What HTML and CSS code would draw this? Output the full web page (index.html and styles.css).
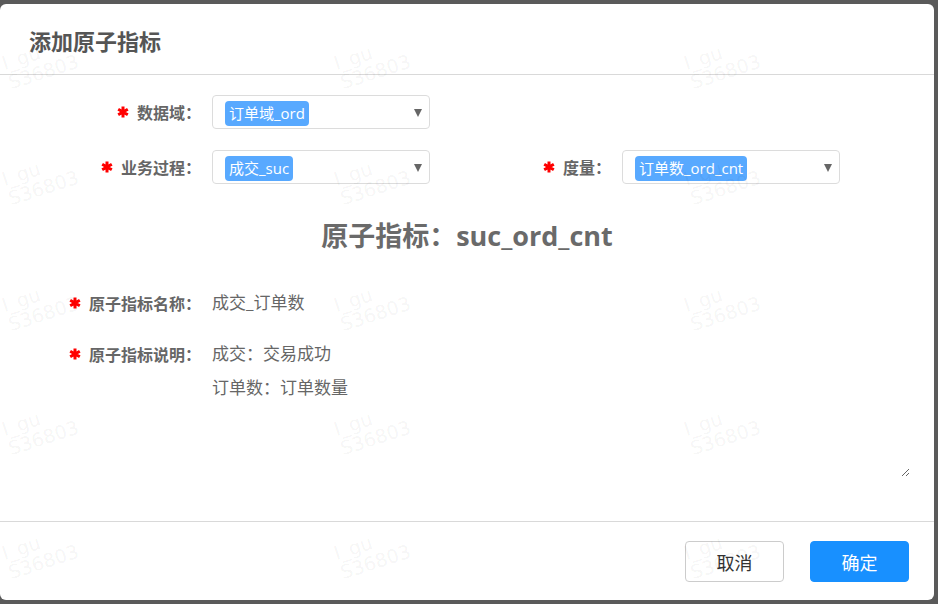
FILE: index.html
```html
<!DOCTYPE html>
<html lang="zh-CN">
<head>
<meta charset="utf-8">
<title>添加原子指标</title>
<link rel="stylesheet" href="styles.css">
</head>
<body>
<div class="dialog">
  <div class="dlg-header">添加原子指标</div>
  <div class="dlg-body">
    <div class="row">
      <div class="item">
        <label class="label w197"><svg class="req" viewBox="0 0 12 12"><path d="M6 0.5v11M1.2 3.2l9.6 5.6M1.2 8.8l9.6-5.6"/></svg>数据域：</label>
        <div class="select"><span class="tag">订单域_ord</span><span class="arrow"></span></div>
      </div>
    </div>
    <div class="row">
      <div class="item">
        <label class="label w197"><svg class="req" viewBox="0 0 12 12"><path d="M6 0.5v11M1.2 3.2l9.6 5.6M1.2 8.8l9.6-5.6"/></svg>业务过程：</label>
        <div class="select"><span class="tag">成交_suc</span><span class="arrow"></span></div>
      </div>
      <div class="item">
        <label class="label w177"><svg class="req" viewBox="0 0 12 12"><path d="M6 0.5v11M1.2 3.2l9.6 5.6M1.2 8.8l9.6-5.6"/></svg>度量：</label>
        <div class="select"><span class="tag">订单数_ord_cnt</span><span class="arrow"></span></div>
      </div>
    </div>
    <h2 class="metric">原子指标：suc_ord_cnt</h2>
    <div class="row name-row">
      <label class="label w197"><svg class="req" viewBox="0 0 12 12"><path d="M6 0.5v11M1.2 3.2l9.6 5.6M1.2 8.8l9.6-5.6"/></svg>原子指标名称：</label>
      <div class="value">成交_订单数</div>
    </div>
    <div class="row desc-row">
      <label class="label w197 desc-label"><svg class="req" viewBox="0 0 12 12"><path d="M6 0.5v11M1.2 3.2l9.6 5.6M1.2 8.8l9.6-5.6"/></svg>原子指标说明：</label>
      <textarea class="desc">成交：交易成功
订单数：订单数量</textarea>
    </div>
  </div>
  <div class="dlg-footer">
    <button class="btn">取消</button>
    <button class="btn primary">确定</button>
  </div>
  <div class="watermarks" aria-hidden="true">
    <span class="wm" style="left:4px;top:38px">l_gu<br>S36803</span>
    <span class="wm" style="left:336px;top:38px">l_gu<br>S36803</span>
    <span class="wm" style="left:686px;top:38px">l_gu<br>S36803</span>
    <span class="wm" style="left:4px;top:154px">l_gu<br>S36803</span>
    <span class="wm" style="left:336px;top:154px">l_gu<br>S36803</span>
    <span class="wm" style="left:686px;top:154px">l_gu<br>S36803</span>
    <span class="wm" style="left:4px;top:280px">l_gu<br>S36803</span>
    <span class="wm" style="left:336px;top:280px">l_gu<br>S36803</span>
    <span class="wm" style="left:686px;top:280px">l_gu<br>S36803</span>
    <span class="wm" style="left:4px;top:404px">l_gu<br>S36803</span>
    <span class="wm" style="left:336px;top:404px">l_gu<br>S36803</span>
    <span class="wm" style="left:686px;top:404px">l_gu<br>S36803</span>
    <span class="wm" style="left:4px;top:528px">l_gu<br>S36803</span>
    <span class="wm" style="left:336px;top:528px">l_gu<br>S36803</span>
    <span class="wm" style="left:686px;top:528px">l_gu<br>S36803</span>
  </div>
</div>
</body>
</html>
```
FILE: styles.css
```css
html, body {
  margin: 0;
  padding: 0;
}
body {
  background: #5a5a5a;
  font-family: "Open Sans", "Noto Sans CJK SC", sans-serif;
  width: 938px;
  height: 604px;
  overflow: hidden;
}
.dialog {
  position: relative;
  margin-top: 4px;
  width: 934px;
  height: 596px;
  background: #fff;
  border-radius: 6px;
  display: flex;
  flex-direction: column;
  overflow: hidden;
}
.dlg-header {
  flex: none;
  height: 71px;
  box-sizing: border-box;
  padding: 20px 0 0 29px;
  font-family: "Noto Sans CJK SC", sans-serif;
  font-size: 22px;
  line-height: 32px;
  font-weight: 700;
  color: #555;
  border-bottom: 1px solid #d9d9d9;
}
.dlg-body {
  flex: 1;
  padding-top: 20px;
  box-sizing: border-box;
}
.row {
  display: flex;
  align-items: center;
  margin-bottom: 21px;
}
.item {
  display: flex;
  align-items: center;
}
.label {
  display: flex;
  align-items: center;
  justify-content: flex-end;
  box-sizing: border-box;
  padding-right: 11px;
  font-family: "Noto Sans CJK SC", sans-serif;
  font-size: 16px;
  font-weight: 700;
  color: #666;
  line-height: 24px;
  flex: none;
}
.w197 { width: 212px; }
.w177 { width: 192px; }
.req {
  width: 12px;
  height: 12px;
  margin-right: 8px;
  flex: none;
}
.req path {
  stroke: #f00;
  stroke-width: 3;
  fill: none;
}
.select {
  width: 218px;
  height: 34px;
  box-sizing: border-box;
  border: 1px solid #dcdcdc;
  border-radius: 4px;
  display: flex;
  align-items: flex-start;
  padding: 5px 7px 0 12px;
}
.tag {
  background: #58a9ff;
  color: #fff;
  font-size: 15px;
  line-height: 25px;
  height: 25px;
  padding: 0 4px;
  border-radius: 4px;
  white-space: nowrap;
}
.arrow {
  margin-left: auto;
  margin-top: 8px;
  width: 0;
  height: 0;
  border-left: 4px solid transparent;
  border-right: 4px solid transparent;
  border-top: 8px solid #666;
}
.metric {
  margin: 30px 0 0;
  text-align: center;
  font-size: 27px;
  line-height: 44px;
  font-weight: 700;
  color: #6a6a6a;
}
.name-row {
  margin-top: 33px;
}
.value {
  font-size: 17px;
  line-height: 24px;
  color: #666;
}
.desc-row {
  align-items: flex-start;
  margin-bottom: 0;
}
.desc-label {
  margin-top: 6px;
}
.desc {
  width: 698px;
  height: 140px;
  box-sizing: border-box;
  border: none;
  outline: none;
  padding: 0;
  margin: 1px 0 0;
  font-family: "Open Sans", "Noto Sans CJK SC", sans-serif;
  font-size: 17px;
  line-height: 34px;
  color: #666;
  background: transparent;
  resize: both;
}
.dlg-footer {
  flex: none;
  height: 79px;
  box-sizing: border-box;
  border-top: 1px solid #d9d9d9;
  display: flex;
  justify-content: flex-end;
  align-items: flex-start;
  padding: 19px 25px 0 0;
  gap: 26px;
}
.btn {
  width: 99px;
  height: 41px;
  box-sizing: border-box;
  border: 1px solid #ccc;
  border-radius: 4px;
  background: #fff;
  color: #333;
  font-family: "Noto Sans CJK SC", sans-serif;
  font-size: 18px;
  padding: 0;
  cursor: pointer;
}
.btn.primary {
  background: #1890ff;
  border-color: #1890ff;
  color: #fff;
}
.watermarks {
  position: absolute;
  inset: 0;
  pointer-events: none;
}
.wm {
  position: absolute;
  font-family: "DejaVu Sans", sans-serif;
  font-size: 19px;
  line-height: 20px;
  color: rgba(0, 0, 0, 0.055);
  transform: rotate(-18deg);
  white-space: nowrap;
}
```
